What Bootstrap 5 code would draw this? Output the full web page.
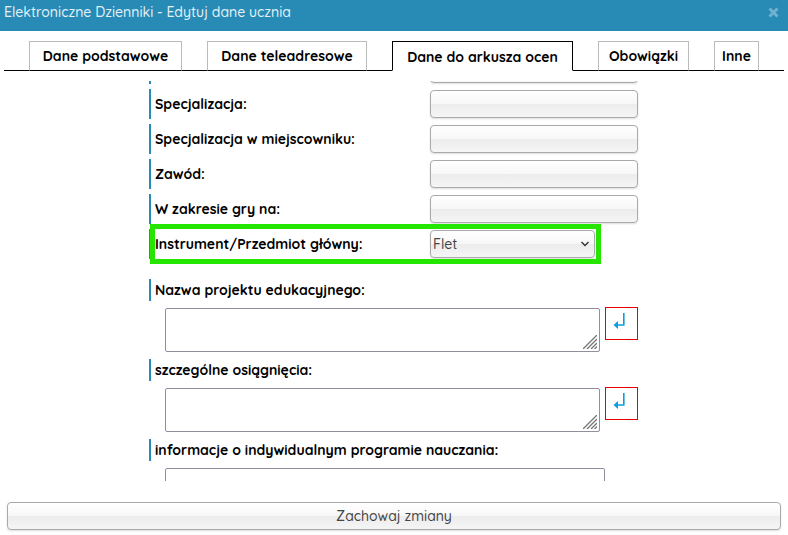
<!DOCTYPE html>
<html lang="pl">
<head>
<meta charset="utf-8">
<meta name="viewport" content="width=device-width, initial-scale=1">
<title>Elektroniczne Dzienniki - Edytuj dane ucznia</title>
<link href="https://cdn.jsdelivr.net/npm/bootstrap@5.3.0/dist/css/bootstrap.min.css" rel="stylesheet">
<style>
body { font-family: Quicksand, Lato, "Liberation Sans", sans-serif; font-size: 14px; line-height: 20px; color: #000; background: #fff; }
.title-bar { background: #288bb5; color: #e4f1f7; height: 31px; padding: 0 9px 7px 4px; }
.title-bar h1 { font-size: 14px; line-height: 20px; font-weight: 500; }
.close-x { color: #6fb1cf; line-height: 0; }
.tab-strip { margin: 10px 4px 0; padding: 0 25px; gap: 25px; height: 30px; box-shadow: inset 0 -1px #000; }
.tab-strip .nav-item { flex: 1 1 0; }
.tab-strip .w-a { flex-grow: 153; } .tab-strip .w-b { flex-grow: 160; } .tab-strip .w-c { flex-grow: 181; } .tab-strip .w-d { flex-grow: 91; } .tab-strip .w-e { flex-grow: 45; }
.tab-strip .nav-link { height: 30px; padding: 4px 0; border: 1px solid #bbb; border-bottom-color: #000; border-radius: 0; color: #000; font-weight: 700; text-align: center; white-space: nowrap; }
.tab-strip .nav-link.active { border-color: #000; border-bottom-color: #fff; background: #fff; padding-top: 5px; }
.scroll-pane { margin-top: 10px; min-height: 0; }
.form-sheet { max-width: 490px; margin-top: -27px; padding-right: 1px; }
.form-line { height: 30px; margin-bottom: 5px; }
.caption { border-left: 2px solid #288bb5; padding-left: 4px; font-weight: 700; white-space: nowrap; }
.form-line .caption { width: 281px; line-height: 30px; }
.glossy { height: 28px; border: 1px solid #aaa; border-radius: 4px; color: #444; background: linear-gradient(#fff, #f7f7f7 49%, #ececec 50%, #f5f5f5); box-shadow: 0 1px 2px #ddd; padding: 0 2px; line-height: 24px; font-weight: 500; }
.pick { width: 165px; appearance: none; }
.pick-arrow { right: 49px; top: 12px; pointer-events: none; }
.marker { left: 1px; top: -5px; right: 37px; height: 40px; border: 5px solid #25e600; pointer-events: none; }
.note { margin-bottom: 7px; }
.note .caption { line-height: 22px; margin-bottom: 7px; }
.note textarea { height: 44px; border: 1px solid #8f8f9d; border-radius: 2px; resize: none; }
.note-body { padding-left: 16px; gap: 5px; }
.note-body.wide { padding-right: 33px; }
.grip { right: 3px; bottom: 3px; pointer-events: none; }
.enter-btn { width: 33px; height: 33px; margin-top: -1px; border: 1px solid #e80000; background: #fff; line-height: 0; }
.footer-bar { padding: 21px 7px 5px; }
</style>
<script src="https://cdn.jsdelivr.net/npm/bootstrap@5.3.0/dist/js/bootstrap.bundle.min.js" defer></script>
</head>
<body class="d-flex flex-column vh-100 overflow-hidden">
<header class="title-bar d-flex flex-shrink-0 align-items-center justify-content-between">
  <h1 class="m-0">Elektroniczne Dzienniki - Edytuj dane ucznia</h1>
  <button type="button" class="close-x border-0 bg-transparent p-0" aria-label="Zamknij"><svg width="11" height="11" viewBox="0 0 11 11"><path d="M1.500 1.500l8 8M9.500 1.500l-8 8" stroke="currentColor" stroke-width="3"/></svg></button>
</header>
<ul class="nav tab-strip flex-nowrap flex-shrink-0">
  <li class="nav-item w-a"><a class="nav-link" href="#">Dane podstawowe</a></li>
  <li class="nav-item w-b"><a class="nav-link" href="#">Dane teleadresowe</a></li>
  <li class="nav-item w-c"><a class="nav-link active" aria-current="page" href="#">Dane do arkusza ocen</a></li>
  <li class="nav-item w-d"><a class="nav-link" href="#">Obowiązki</a></li>
  <li class="nav-item w-e"><a class="nav-link" href="#">Inne</a></li>
</ul>
<main class="scroll-pane flex-fill overflow-hidden">
  <form class="form-sheet mx-auto" id="sheet">
    <div class="form-line d-flex align-items-center"><span class="caption align-self-stretch"></span><input class="glossy flex-fill" type="text" aria-label="Specjalność"></div>
    <div class="form-line d-flex align-items-center"><label class="caption" for="f1">Specjalizacja:</label><input class="glossy flex-fill" type="text" id="f1"></div>
    <div class="form-line d-flex align-items-center"><label class="caption" for="f2">Specjalizacja w miejscowniku:</label><input class="glossy flex-fill" type="text" id="f2"></div>
    <div class="form-line d-flex align-items-center"><label class="caption" for="f3">Zawód:</label><input class="glossy flex-fill" type="text" id="f3"></div>
    <div class="form-line d-flex align-items-center"><label class="caption" for="f4">W zakresie gry na:</label><input class="glossy flex-fill" type="text" id="f4"></div>
    <div class="form-line d-flex align-items-center position-relative mb-0"><label class="caption" for="f5">Instrument/Przedmiot główny:</label><select class="glossy pick" id="f5"><option>Flet</option></select>
      <svg class="pick-arrow position-absolute" width="8" height="6" viewBox="0 0 8 6"><path d="M0.500 1l3.500 3.500L7.500 1" fill="none" stroke="#333" stroke-width="1.500"/></svg>
      <span class="marker position-absolute"></span></div>
    <div class="note mt-3 pt-1">
      <label class="caption d-block" for="t1">Nazwa projektu edukacyjnego:</label>
      <div class="note-body d-flex"><div class="position-relative flex-fill d-flex"><textarea class="w-100" id="t1"></textarea><svg class="grip position-absolute" width="14" height="14" viewBox="0 0 14 14"><path d="M0 14L14 0M4 14L14 4M8 14l6-6M11.500 14l2.500-2.500" stroke="#777" stroke-width="1.300"/></svg></div>
      <button type="button" class="enter-btn p-0" aria-label="Wstaw"><svg width="31" height="31" viewBox="0 0 31 31"><path d="M17.800 5v12h-7" fill="none" stroke="#0d9ddb" stroke-width="1.600"/><path d="M7.500 17l4.500-4v8z" fill="#0d9ddb"/></svg></button></div>
    </div>
    <div class="note">
      <label class="caption d-block" for="t2">szczególne osiągnięcia:</label>
      <div class="note-body d-flex"><div class="position-relative flex-fill d-flex"><textarea class="w-100" id="t2"></textarea><svg class="grip position-absolute" width="14" height="14" viewBox="0 0 14 14"><path d="M0 14L14 0M4 14L14 4M8 14l6-6M11.500 14l2.500-2.500" stroke="#777" stroke-width="1.300"/></svg></div>
      <button type="button" class="enter-btn p-0" aria-label="Wstaw"><svg width="31" height="31" viewBox="0 0 31 31"><path d="M17.800 5v12h-7" fill="none" stroke="#0d9ddb" stroke-width="1.600"/><path d="M7.500 17l4.500-4v8z" fill="#0d9ddb"/></svg></button></div>
    </div>
    <div class="note">
      <label class="caption d-block" for="t3">informacje o indywidualnym programie nauczania:</label>
      <div class="note-body wide d-flex"><textarea class="w-100" id="t3"></textarea></div>
    </div>
  </form>
</main>
<footer class="footer-bar"><button type="submit" form="sheet" class="glossy w-100 d-block">Zachowaj zmiany</button></footer>
</body>
</html>
